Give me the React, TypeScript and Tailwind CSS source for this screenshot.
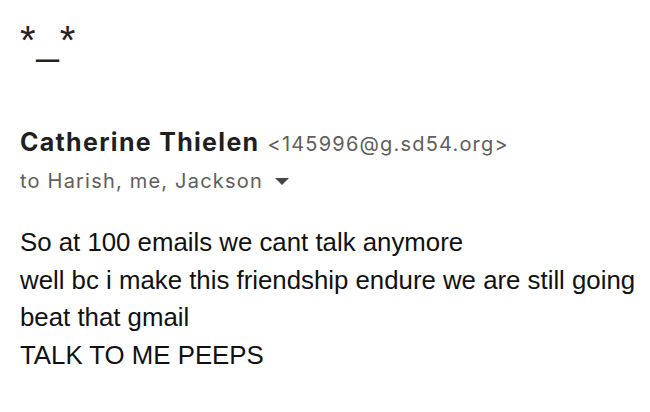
import React from "react";

const sans = { fontFamily: 'Inter, Roboto, "Open Sans", sans-serif' };
const arial = { fontFamily: '"Liberation Sans", Arial, Helvetica, sans-serif' };

export default function App() {
  return (
    <div className="w-[650px] h-[412px] bg-white overflow-hidden pl-[20px] pt-[16px]">
      <div className="text-[40px] leading-[48px] tracking-[1px] text-[#222]" style={arial}>
        *_*
      </div>
      <div className="mt-[63px] flex items-baseline gap-[8px] leading-[30px]" style={sans}>
        <span className="text-[25px] font-bold tracking-[1.3px] text-[#1f1f1f]">Catherine Thielen</span>
        <span className="text-[20px] tracking-[1.2px] text-[#5e5e5e]">&lt;145996@g.sd54.org&gt;</span>
      </div>
      <div className="mt-[9px] flex items-center gap-[12px] text-[#5e5e5e]" style={sans}>
        <span className="text-[20px] leading-[26px] tracking-[1.2px]">to Harish, me, Jackson</span>
        <svg width="14" height="8" viewBox="0 0 14 8" className="mt-[2px]">
          <path d="M0 0 L14 0 L7 7 Z" fill="#444746" />
        </svg>
      </div>
      <div className="mt-[30px] text-[25.8px] leading-[37.7px] text-[#111]" style={arial}>
        <div>So at 100 emails we cant talk anymore</div>
        <div>well bc i make this friendship endure we are still going</div>
        <div>beat that gmail</div>
        <div>TALK TO ME PEEPS</div>
      </div>
    </div>
  );
}
